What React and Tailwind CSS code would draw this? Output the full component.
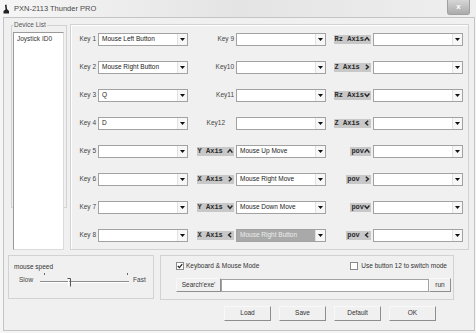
import React from 'react'

const rows = [
  { k: 'Key 1', v: 'Mouse Left Button', mid: { label: 'Key 9' }, right: { text: 'Rz Axis', dir: 'up' } },
  { k: 'Key 2', v: 'Mouse Right Button', mid: { label: 'Key10' }, right: { text: 'Z Axis ', dir: 'right' } },
  { k: 'Key 3', v: 'Q', mid: { label: 'Key11' }, right: { text: 'Rz Axis', dir: 'down' } },
  { k: 'Key 4', v: 'D', mid: { label: 'Key12', wide: true }, right: { text: 'Z Axis ', dir: 'left' } },
  { k: 'Key 5', v: '', mid: { text: 'Y Axis ', dir: 'up', v: 'Mouse Up Move' }, right: { text: 'pov', dir: 'up' } },
  { k: 'Key 6', v: '', mid: { text: 'X Axis ', dir: 'right', v: 'Mouse Right Move' }, right: { text: 'pov ', dir: 'right' } },
  { k: 'Key 7', v: '', mid: { text: 'Y Axis ', dir: 'down', v: 'Mouse Down Move' }, right: { text: 'pov', dir: 'down' } },
  { k: 'Key 8', v: '', mid: { text: 'X Axis ', dir: 'left', v: 'Mouse Right Button', sel: true }, right: { text: 'pov ', dir: 'left' } },
]

const chevrons = {
  up: 'M0.6 4.6 L3 1.6 L5.4 4.6',
  right: 'M1.8 0.8 L4.4 3 L1.8 5.2',
  down: 'M0.6 1.6 L3 4.4 L5.4 1.6',
  left: 'M4.2 0.8 L1.6 3 L4.2 5.2',
}

function Chevron({ dir }) {
  return (
    <svg width="6" height="6" viewBox="0 0 6 6" className="shrink-0">
      <path d={chevrons[dir]} fill="none" stroke="#2a2a2a" strokeWidth="1.5" />
    </svg>
  )
}

function AxisLabel({ text, dir }) {
  return (
    <div className="mr-[2px] flex h-[9px] items-center bg-[#c8c8c8] px-[1px] font-['Liberation_Mono',monospace] text-[7px] font-bold leading-none whitespace-pre text-[#2b2b2b]">
      <span>{text}</span>
      <Chevron dir={dir} />
    </div>
  )
}

function Combo({ value, selected }) {
  return (
    <div className="flex h-[13px] w-[90px] shrink-0 border border-[#a2a2a2] bg-white">
      <div
        className={
          selected
            ? 'flex flex-1 items-center bg-[#a9a9a9] pl-[3px] text-[6.5px] leading-none whitespace-nowrap text-[#ececec]'
            : 'flex flex-1 items-center pl-[3px] text-[6.5px] leading-none whitespace-nowrap text-[#222]'
        }
      >
        {value}
      </div>
      <div className="flex w-[10px] items-center justify-center border-l border-[#e2e2e2] bg-[#f7f7f7]">
        <svg width="5" height="3" viewBox="0 0 5 3">
          <path d="M0 0 H5 L2.5 3 Z" fill="#111" />
        </svg>
      </div>
    </div>
  )
}

function Label({ children, wide }) {
  return (
    <span className={wide ? 'mr-[11px] text-[6.5px] leading-none text-[#444]' : 'mr-[2px] text-[6.5px] leading-none text-[#444]'}>
      {children}
    </span>
  )
}

function Button({ children, className }) {
  return (
    <div
      className={
        'flex items-center justify-center border border-t-[#f8f8f8] border-l-[#f8f8f8] border-r-[#8e8e8e] border-b-[#8e8e8e] bg-[#f0f0f0] text-[6.5px] leading-none text-[#333] ' +
        className
      }
    >
      {children}
    </div>
  )
}

function Checkbox({ checked }) {
  return (
    <div className="flex h-[8px] w-[8px] shrink-0 items-center justify-center border border-[#8a8a8a] bg-white">
      {checked && (
        <svg width="6" height="6" viewBox="0 0 6 6">
          <path d="M0.8 3 L2.4 4.6 L5.2 1.2" fill="none" stroke="#222" strokeWidth="1.2" />
        </svg>
      )}
    </div>
  )
}

export default function App() {
  return (
    <div className="flex h-[333px] w-[476px] flex-col bg-[#f5f5f5] font-['Liberation_Sans',Arial,sans-serif]">
      {/* title bar */}
      <div className="flex h-[17px] items-center bg-gradient-to-r from-[#f6f6f6] via-[#e4e4e4] to-[#efefef]">
        <svg width="7" height="10" viewBox="0 0 7 10" className="ml-[3px]">
          <path d="M2 1 L3.5 0.5 L4 5 L6 7 L6 9.5 L0.5 9.5 L0.5 7 L2.5 5.5 Z" fill="#222" />
        </svg>
        <span className="ml-[4px] text-[7.5px] leading-none text-[#4a4a4a]">PXN-2113 Thunder PRO</span>
        <div className="mr-[6px] ml-auto flex h-[15px] w-[23px] items-center justify-center self-start rounded-b-[3px] border border-t-0 border-[#a0a0a0] bg-gradient-to-b from-[#d6d6d6] to-[#ababab] text-[8px] leading-none font-bold text-white">
          x
        </div>
      </div>

      {/* client area */}
      <div className="mr-[1px] ml-[3px] flex h-[314px] flex-col border border-[#c4c4c4] bg-[#f0f0f0]">
        <div className="mt-[6px] flex">
          {/* device list */}
          <div className="relative mt-[1px] ml-[7px] h-[183px] w-[56px] border border-[#d2d2d2]">
            <span className="absolute -top-[4px] left-[1px] bg-[#f0f0f0] px-[1px] text-[6.5px] leading-none text-[#555]">
              Device List
            </span>
            <div className="mt-[6px] ml-[1px] h-[218px] w-[51px] border border-t-[#9a9a9a] border-l-[#9a9a9a] border-r-[#dadada] border-b-[#dadada] bg-white pt-[3px] pl-[3px] text-[6.5px] leading-none text-[#333]">
              Joystick ID0
            </div>
          </div>

          {/* key panel */}
          <div className="ml-[3px] h-[226px] w-[399px] border border-[#d2d2d2] shadow-[inset_1px_1px_0_#ffffff]">
            {rows.map((r) => (
              <div key={r.k} className="grid h-[28px] grid-cols-[117px_138px_137px] items-center">
                <div className="flex items-center justify-end">
                  <Label>{r.k}</Label>
                  <Combo value={r.v} />
                </div>
                <div className="flex items-center justify-end">
                  {r.mid.label ? <Label wide={r.mid.wide}>{r.mid.label}</Label> : <AxisLabel text={r.mid.text} dir={r.mid.dir} />}
                  <Combo value={r.mid.v || ''} selected={r.mid.sel} />
                </div>
                <div className="flex items-center justify-end">
                  <AxisLabel text={r.right.text} dir={r.right.dir} />
                  <Combo value="" />
                </div>
              </div>
            ))}
          </div>
        </div>

        <div className="mt-[5px] flex">
          {/* mouse speed */}
          <div className="ml-[4px] h-[44px] w-[146px] border border-[#d2d2d2] pt-[8px] pl-[5px]">
            <div className="text-[6.5px] leading-none text-[#333]">mouse speed</div>
            <div className="mt-[2px] ml-[5px] flex items-center">
              <span className="text-[6.5px] leading-none text-[#444]">Slow</span>
              <svg width="92" height="16" viewBox="0 0 92 16" className="ml-[5px]">
                <line x1="6.5" y1="0" x2="6.5" y2="2" stroke="#666" strokeWidth="1" />
                <line x1="89.5" y1="0" x2="89.5" y2="2" stroke="#666" strokeWidth="1" />
                <line x1="2" y1="8.5" x2="91" y2="8.5" stroke="#8c8c8c" strokeWidth="1" />
                <line x1="2" y1="9.5" x2="91" y2="9.5" stroke="#ffffff" strokeWidth="1" />
                <path d="M29.5 5.5 H32.5 V13.5" fill="none" stroke="#555" strokeWidth="1" />
                <path d="M30.5 6.5 V13" fill="none" stroke="#ffffff" strokeWidth="1" />
              </svg>
              <span className="ml-[3px] text-[6.5px] leading-none text-[#444]">Fast</span>
            </div>
          </div>

          {/* keyboard & mouse mode */}
          <div className="ml-[6px] h-[45px] w-[294px] border border-[#d2d2d2] pt-[6px] pr-[2px] pl-[15px]">
            <div className="flex items-center pr-[4px]">
              <Checkbox checked />
              <span className="ml-[2px] text-[6.5px] leading-none text-[#333]">Keyboard &amp; Mouse Mode</span>
              <div className="ml-auto flex items-center">
                <Checkbox />
                <span className="ml-[3px] text-[6.5px] leading-none text-[#333]">Use button 12 to switch mode</span>
              </div>
            </div>
            <div className="mt-[8px] flex items-center">
              <Button className="h-[14px] w-[45px]">Search'exe'</Button>
              <div className="h-[13px] flex-1 border border-[#a2a2a2] bg-white" />
              <Button className="h-[14px] w-[22px]">run</Button>
            </div>
          </div>
        </div>

        <div className="mt-[6px] ml-[220px] flex gap-[8px]">
          <Button className="h-[15px] w-[47px]">Load</Button>
          <Button className="h-[15px] w-[47px]">Save</Button>
          <Button className="h-[15px] w-[47px]">Default</Button>
          <Button className="h-[15px] w-[47px]">OK</Button>
        </div>
      </div>
    </div>
  )
}
